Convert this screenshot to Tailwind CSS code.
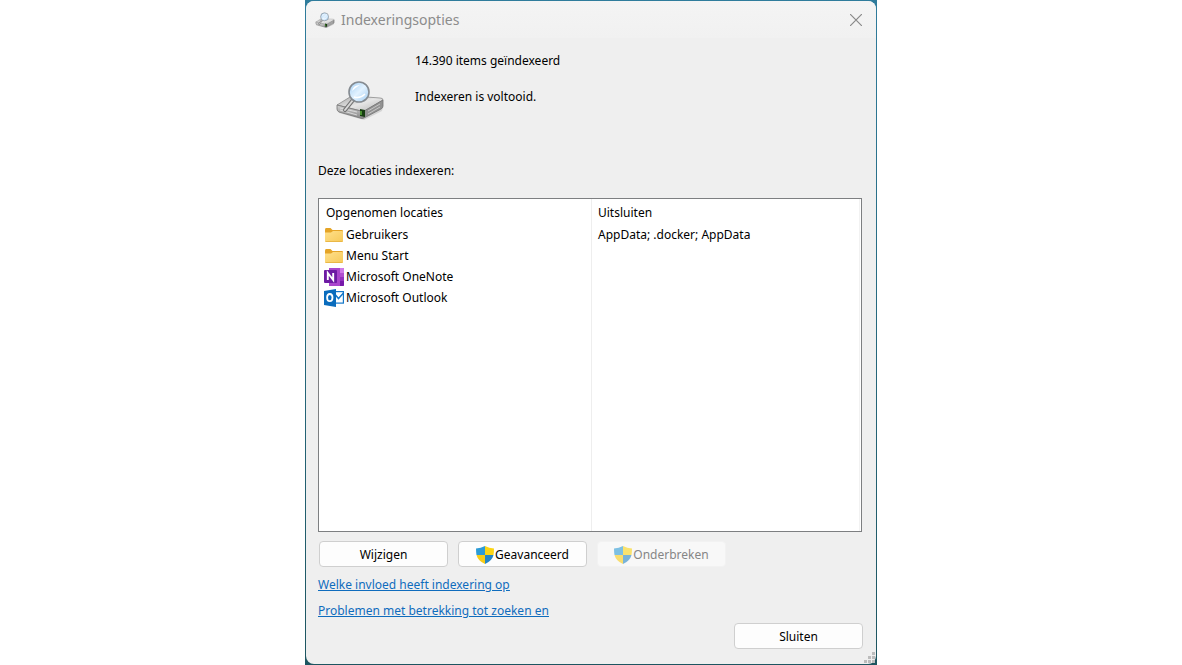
<!DOCTYPE html>
<html lang="nl">
<head>
    <meta charset="UTF-8">
    <meta name="viewport" content="width=device-width, initial-scale=1.0">
    <title>Indexeringsopties</title>
    <script src="https://cdn.jsdelivr.net/npm/@tailwindcss/browser@4"></script>
</head>
<body class="bg-white">
    <!-- Shared icons -->
    <svg class="absolute w-0 h-0" aria-hidden="true">
        <defs>
            <linearGradient id="driveTop" x1="0" y1="0" x2="1" y2="1">
                <stop offset="0" stop-color="#a4a4a4"/>
                <stop offset="0.5" stop-color="#e6e6e6"/>
                <stop offset="1" stop-color="#b5b5b5"/>
            </linearGradient>
            <linearGradient id="driveSide" x1="0" y1="0" x2="0" y2="1">
                <stop offset="0" stop-color="#d2d2d2"/>
                <stop offset="1" stop-color="#868686"/>
            </linearGradient>
            <linearGradient id="lens" x1="0" y1="0" x2="1" y2="1">
                <stop offset="0" stop-color="#a5cff3"/>
                <stop offset="0.5" stop-color="#e2f2ff"/>
                <stop offset="1" stop-color="#a2ccf1"/>
            </linearGradient>
            <linearGradient id="folderFront" x1="0" y1="0" x2="1" y2="1">
                <stop offset="0" stop-color="#ffe08a"/>
                <stop offset="1" stop-color="#f6c95a"/>
            </linearGradient>
        </defs>
        <symbol id="drive" viewBox="0 0 48 40">
            <path d="M2 30 L28 38 L47 27 L46 31 L28 40 L3 33 Z" fill="#d4d4d4"/>
            <path d="M1 25 L14 17 Q15 16 17 16 L44 18 Q47 18 47 20 L29 31 Q27 32 25 31 Z" fill="url(#driveTop)" stroke="#8c8c8c" stroke-width="0.8"/>
            <path d="M1 25 L25 31 Q27 32 28 31 L28 38 Q26 39 24 38 L3 32 Q1 31 1 29 Z" fill="url(#driveSide)" stroke="#747474" stroke-width="0.8"/>
            <path d="M28 31 L47 20 L47 26 Q47 28 45 29 L28 38 Z" fill="#929292" stroke="#747474" stroke-width="0.8"/>
            <path d="M4 28 L21 32 M4 30 L21 35" stroke="#dedede" stroke-width="0.9"/>
            <path d="M32 31 L44 24 M32 34 L44 27" stroke="#cccccc" stroke-width="0.9"/>
            <path d="M24 29 L29 30 L29 37 L24 36 Z" fill="#173c12"/>
            <path d="M25 31 V35" stroke="#63bd3e" stroke-width="1.3"/>
            <path d="M17 20 L9 30" stroke="#717171" stroke-width="4" stroke-linecap="round"/>
            <path d="M17 20 L9 30" stroke="#d9d9d9" stroke-width="2" stroke-linecap="round"/>
            <circle cx="23" cy="12" r="10" fill="url(#lens)" stroke="#858b91" stroke-width="1.6"/>
            <path d="M16 11 Q17 5 24 5 Q19 8 16 11 Z" fill="#ffffff"/>
            <path d="M18 17 Q24 19 29 14" stroke="#ffffff" stroke-width="1.5" fill="none"/>
        </symbol>
        <symbol id="folder" viewBox="0 0 18 14">
            <path d="M0 2 Q0 0 1 0 H5.5 L7.5 2 H17 Q18 2 18 3 V12 H0 Z" fill="#e5a426"/>
            <path d="M0 4.5 H6 L8 3 H17 Q18 3 18 4 V13 Q18 14 17 14 H1 Q0 14 0 13 Z" fill="url(#folderFront)"/>
            <path d="M0.5 13.5 H17.5" stroke="#e6b13d" stroke-width="0.8"/>
        </symbol>
        <symbol id="shield" viewBox="0 0 18 18">
            <path d="M9 0 Q5 2.3 0 2.4 Q0 6 0.5 9 H9 Z" fill="#2c9bd6"/>
            <path d="M9 0 Q13 2.3 18 2.4 Q18 6 17.5 9 H9 Z" fill="#fbd514"/>
            <path d="M0.5 9 Q2 15 9 18 V9 Z" fill="#f8cc16"/>
            <path d="M17.5 9 Q16 15 9 18 V9 Z" fill="#2586c6"/>
        </symbol>
    </svg>

    <!-- Desktop behind the window -->
    <div class="mx-auto w-full max-w-[572px] min-h-screen flex bg-linear-to-b from-[#2f7c9c] to-[#1d5560] p-px font-['Noto_Sans',sans-serif] text-[12px] leading-[16px] text-black">
        <main class="flex-1 flex flex-col bg-[#efefef] rounded-lg overflow-hidden">

            <!-- Title bar -->
            <header class="flex items-center h-[37px] bg-linear-to-b from-[#f4f4f4] to-[#f1f1f1] pl-[9px] pr-[14px] text-[#8c8c8c]">
                <svg class="w-5 h-4 mr-[6px]"><use href="#drive"/></svg>
                <h1 class="flex-1 text-[14px] leading-5">Indexeringsopties</h1>
                <button type="button" aria-label="Sluiten" class="w-3 h-3">
                    <svg class="w-3 h-3" viewBox="0 0 12 12" fill="none" stroke="#8a8a8a" stroke-width="1.2"><path d="M0 0 L12 12 M12 0 L0 12"/></svg>
                </button>
            </header>

            <div class="flex-1 flex flex-col pl-3 pr-[14px] pt-[15px] pb-[15px]">
                <!-- Status -->
                <section class="flex pl-[18px]">
                    <svg class="w-12 h-10 mt-[27px] mr-[31px]"><use href="#drive"/></svg>
                    <div class="flex flex-col gap-5">
                        <p>14.390 items geïndexeerd</p>
                        <p>Indexeren is voltooid.</p>
                    </div>
                </section>

                <h2 class="mt-[43px] mb-[19px]">Deze locaties indexeren:</h2>

                <!-- Locations -->
                <div class="flex-1 flex bg-white border border-[#7d7f81] pr-px">
                    <div class="flex-1 flex border-r border-[#f2f2f2] bg-[linear-gradient(#eeeeee,#eeeeee)] bg-[length:1px_100%] bg-[position:272px_0] bg-no-repeat">
                        <table class="self-start w-full table-fixed text-left mt-[3px]">
                            <thead>
                                <tr class="h-[22px]">
                                    <th class="w-[273px] pl-[7px] font-normal">Opgenomen locaties</th>
                                    <th class="pl-[6px] font-normal">Uitsluiten</th>
                                </tr>
                            </thead>
                            <tbody>
                                <tr class="h-[21px]">
                                    <td class="pl-[5px]"><div class="flex items-center gap-[2px]"><svg class="w-5 h-[14px]"><use href="#folder"/></svg>Gebruikers</div></td>
                                    <td class="pl-[6px]">AppData; .docker; AppData</td>
                                </tr>
                                <tr class="h-[21px]">
                                    <td class="pl-[5px]"><div class="flex items-center gap-[2px]"><svg class="w-5 h-[14px]"><use href="#folder"/></svg>Menu Start</div></td>
                                    <td></td>
                                </tr>
                                <tr class="h-[21px]">
                                    <td class="pl-[5px]">
                                        <div class="flex items-center gap-[2px]">
                                            <svg class="w-5 h-[18px]" viewBox="0 0 20 18">
                                                <path d="M5 0 H19 Q20 0 20 1 V17 Q20 18 19 18 H5 Z" fill="#a946cc"/>
                                                <path d="M16 0 H19 Q20 0 20 1 V5 H16 Z" fill="#cf7ae8"/>
                                                <path d="M16 5 H20 V9 H16 Z" fill="#b04fd0"/>
                                                <path d="M16 9 H20 V13 H16 Z" fill="#9332bf"/>
                                                <path d="M16 13 H20 V17 Q20 18 19 18 H16 Z" fill="#7719aa"/>
                                                <rect x="0" y="2" width="13" height="13" rx="1" fill="#6d1ba3"/>
                                                <path d="M3.8 12 V5 L9.2 12 V5" fill="none" stroke="#ffffff" stroke-width="1.9"/>
                                            </svg>
                                            Microsoft OneNote
                                        </div>
                                    </td>
                                    <td></td>
                                </tr>
                                <tr class="h-[21px]">
                                    <td class="pl-[5px]">
                                        <div class="flex items-center gap-[2px]">
                                            <svg class="w-5 h-[18px]" viewBox="0 0 20 18">
                                                <rect x="9" y="2.6" width="10.4" height="11.5" fill="#ffffff" stroke="#1477c9" stroke-width="1.2"/>
                                                <path d="M11.5 6 L14.5 9.5 L19.5 4" fill="none" stroke="#1477c9" stroke-width="1.5"/>
                                                <path d="M0 2 L12 0 V18 L0 16 Z" fill="#0a6cbd"/>
                                                <ellipse cx="5.8" cy="8.6" rx="2.7" ry="3.6" fill="none" stroke="#ffffff" stroke-width="1.8"/>
                                            </svg>
                                            Microsoft Outlook
                                        </div>
                                    </td>
                                    <td></td>
                                </tr>
                            </tbody>
                        </table>
                    </div>
                </div>

                <!-- Actions -->
                <div class="flex gap-[10px] mt-[9px] pl-px">
                    <button type="button" class="w-[129px] h-[26px] pt-[2px] bg-[#fdfdfd] border border-[#cfcfcf] rounded">Wijzigen</button>
                    <button type="button" class="w-[129px] h-[26px] pt-[2px] flex items-center justify-center gap-px bg-[#fdfdfd] border border-[#cfcfcf] rounded"><svg class="w-[18px] h-[18px]"><use href="#shield"/></svg>Geavanceerd</button>
                    <button type="button" disabled class="w-[129px] h-[26px] pt-[2px] flex items-center justify-center gap-px bg-[#f8f8f8] border border-[#f2f2f2] rounded text-[#868686]"><svg class="w-[18px] h-[18px] opacity-60"><use href="#shield"/></svg>Onderbreken</button>
                </div>

                <nav class="flex flex-col items-start gap-[10px] mt-[10px] text-[#0f6cbd] underline">
                    <a href="#">Welke invloed heeft indexering op</a>
                    <a href="#">Problemen met betrekking tot zoeken en</a>
                </nav>

                <div class="flex justify-end mt-1 -mr-px">
                    <button type="button" class="w-[129px] h-[26px] pt-[2px] bg-[#fdfdfd] border border-[#cfcfcf] rounded">Sluiten</button>
                </div>
            </div>
        </main>
    </div>

    <!-- Resize grip -->
    <div class="fixed inset-x-0 bottom-[2px] mx-auto w-full max-w-[572px] flex justify-end pr-[2px] pointer-events-none">
        <svg class="w-3 h-3" viewBox="0 0 12 12" fill="#bcbcbc">
            <path d="M9 1 h3 v3 h-3 z M5 5 h3 v3 h-3 z M9 5 h3 v3 h-3 z M1 9 h3 v3 h-3 z M5 9 h3 v3 h-3 z M9 9 h3 v3 h-3 z"/>
        </svg>
    </div>
</body>
</html>
